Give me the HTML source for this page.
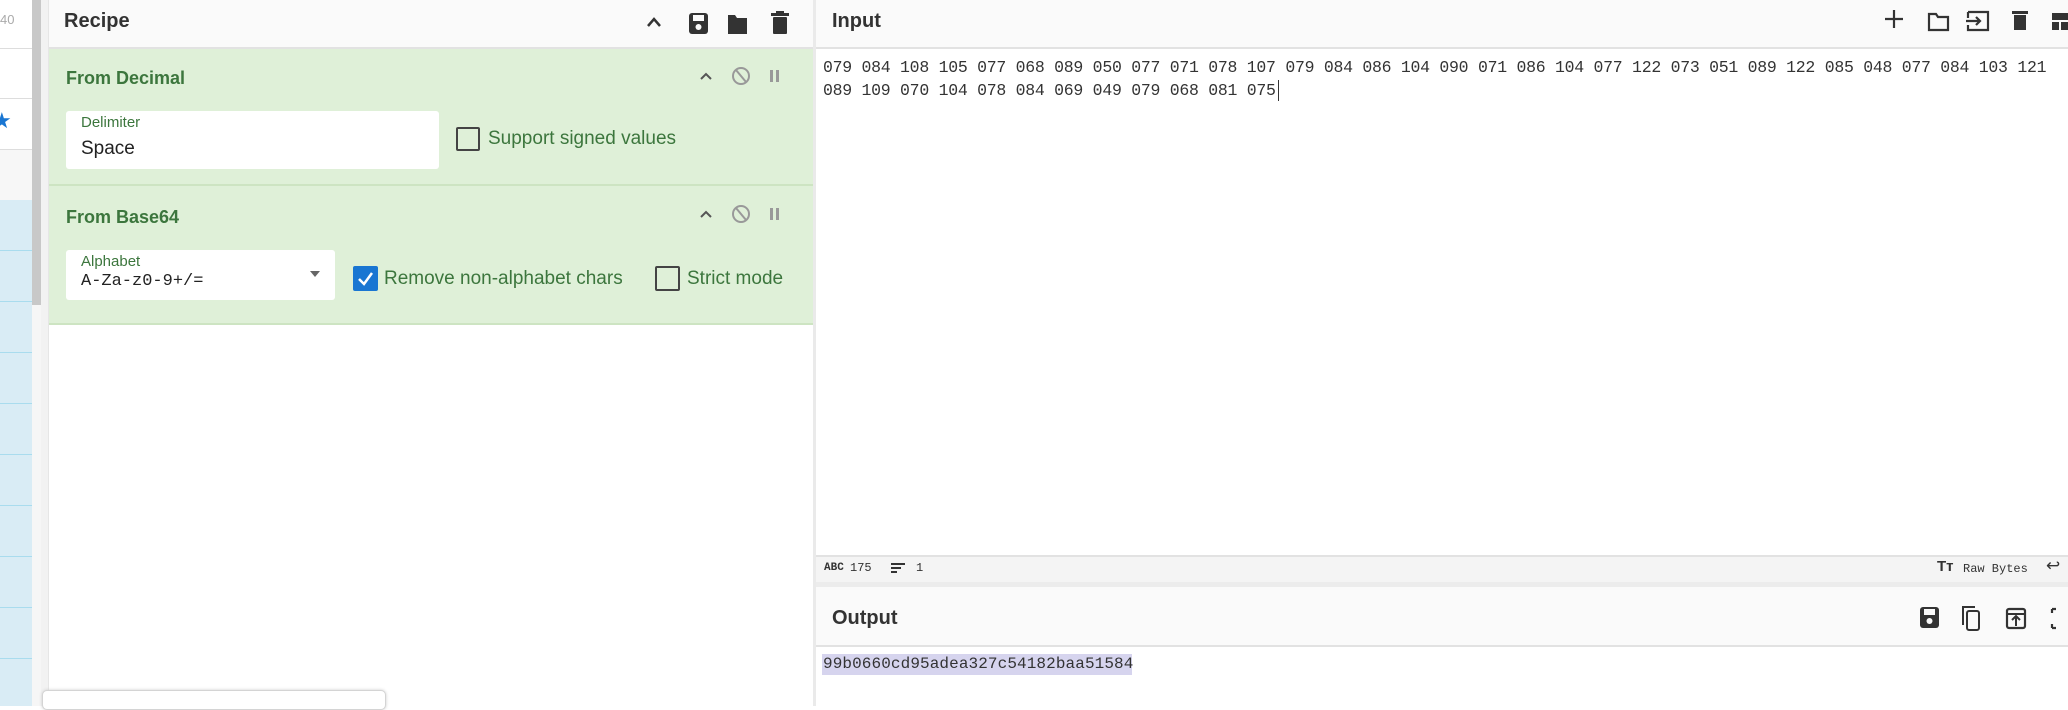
<!DOCTYPE html>
<html><head><meta charset="utf-8"><style>
*{box-sizing:border-box;margin:0;padding:0}
body{width:2068px;height:706px;overflow:hidden;background:#fff;font-family:"Liberation Sans",sans-serif;position:relative}
.a{position:absolute}
.mono{font-family:"Liberation Mono",monospace}
.hdr{background:#fafafa;border-bottom:2px solid #e2e2e2}
.title{font-size:20px;font-weight:bold;color:#333}
.grn{background:#dff0d8}
.gt{color:#3c763d}
.box{background:#fff;border-radius:3px}
.cb{border:2px solid #444;border-radius:2px;background:transparent}
</style></head><body>
<!-- left strip -->
<div class="a" style="left:0;top:0;width:32px;height:706px;background:#fff"></div>
<div class="a" style="left:0;top:12px;font-size:13px;color:#aaa">40</div>
<div class="a" style="left:0;top:48px;width:32px;height:1px;background:#ddd"></div>
<div class="a" style="left:0;top:98px;width:32px;height:1px;background:#ddd"></div>
<div class="a" style="left:-8px;top:108px;color:#1976d2;font-size:22px">★</div>
<div class="a" style="left:0;top:149px;width:32px;height:51px;background:#f7f7f7;border-top:1px solid #ddd"></div>
<div class="a" style="left:0;top:200px;width:32px;height:506px;background:repeating-linear-gradient(#d9ecf5 0,#d9ecf5 50px,#a9dcee 50px,#a9dcee 51px)"></div>
<div class="a" style="left:32px;top:0;width:9px;height:305px;background:#c8c8c8"></div>
<div class="a" style="left:32px;top:305px;width:9px;height:401px;background:#f6f6f6"></div>
<div class="a" style="left:41px;top:0;width:8px;height:706px;background:#f2f2f2;border-right:1px solid #e6e6e6"></div>
<!-- recipe -->
<div class="a hdr" style="left:49px;top:0;width:764px;height:49px"></div>
<div class="a title" style="left:64px;top:10px">Recipe</div>
<svg class="a" style="left:644px;top:10px" width="160" height="26" viewBox="0 0 160 26">
<path d="M4 16 L10 9 L16 16" stroke="#333" stroke-width="2.5" fill="none"/>
<rect x="45" y="3" width="19" height="21" rx="3" fill="#333"/><rect x="49" y="5" width="11" height="6" fill="#fafafa"/><circle cx="54.5" cy="17" r="3" fill="#fafafa"/>
<path d="M84 5 h7 l2 3 h10 v16 h-19z" fill="#333"/>
<rect x="129" y="7" width="14" height="17" rx="1" fill="#333"/><rect x="127" y="3" width="18" height="3" fill="#333"/><rect x="132" y="1" width="8" height="3" fill="#333"/>
</svg>
<div class="a grn" style="left:49px;top:49px;width:764px;height:137px;border-bottom:2px solid #cde4c2"></div>
<div class="a gt" style="left:66px;top:68px;font-size:18px;font-weight:bold">From Decimal</div>
<svg class="a" style="left:696px;top:64px" width="100" height="24"><path d="M5 15 L10 10 L15 15" stroke="#555" stroke-width="2" fill="none"/><circle cx="45" cy="12" r="8" stroke="#999" stroke-width="2" fill="none"/><path d="M40 6 L50 18" stroke="#999" stroke-width="2"/><rect x="74" y="6" width="3" height="12" fill="#999"/><rect x="80" y="6" width="3" height="12" fill="#999"/></svg>
<div class="a box" style="left:66px;top:111px;width:373px;height:58px"></div>
<div class="a gt" style="left:81px;top:114px;font-size:15px">Delimiter</div>
<div class="a" style="left:81px;top:138px;font-size:19px;color:#222">Space</div>
<div class="a cb" style="left:456px;top:127px;width:24px;height:24px"></div>
<div class="a gt" style="left:488px;top:128px;font-size:19px">Support signed values</div>
<div class="a grn" style="left:49px;top:186px;width:764px;height:139px;border-bottom:2px solid #cde4c2"></div>
<div class="a gt" style="left:66px;top:207px;font-size:18px;font-weight:bold">From Base64</div>
<svg class="a" style="left:696px;top:202px" width="100" height="24"><path d="M5 15 L10 10 L15 15" stroke="#555" stroke-width="2" fill="none"/><circle cx="45" cy="12" r="8" stroke="#999" stroke-width="2" fill="none"/><path d="M40 6 L50 18" stroke="#999" stroke-width="2"/><rect x="74" y="6" width="3" height="12" fill="#999"/><rect x="80" y="6" width="3" height="12" fill="#999"/></svg>
<div class="a box" style="left:66px;top:250px;width:269px;height:50px"></div>
<div class="a gt" style="left:81px;top:253px;font-size:15px">Alphabet</div>
<div class="a mono" style="left:81px;top:272px;font-size:17px;color:#222">A-Za-z0-9+/=</div>
<div class="a" style="left:310px;top:271px;width:0;height:0;border-left:5px solid transparent;border-right:5px solid transparent;border-top:6px solid #666"></div>
<div class="a" style="left:353px;top:266px;width:25px;height:25px;background:#1976d2;border-radius:2px"></div>
<svg class="a" style="left:353px;top:266px" width="25" height="25"><path d="M6 13 L11 18 L19 7" stroke="#fff" stroke-width="2.5" fill="none"/></svg>
<div class="a gt" style="left:384px;top:268px;font-size:19px">Remove non-alphabet chars</div>
<div class="a cb" style="left:655px;top:266px;width:25px;height:25px"></div>
<div class="a gt" style="left:687px;top:268px;font-size:19px">Strict mode</div>
<div class="a" style="left:42px;top:690px;width:344px;height:20px;background:#fff;border:1px solid #d4d4d4;border-radius:5px;box-shadow:0 0 3px #ccc"></div>
<div class="a" style="left:813px;top:0;width:3px;height:706px;background:#eaeaea"></div>
<!-- input -->
<div class="a hdr" style="left:816px;top:0;width:1252px;height:49px"></div>
<div class="a title" style="left:832px;top:10px">Input</div>
<svg class="a" style="left:1880px;top:6px" width="188" height="30"><path d="M14 4 v18 M5 13 h18" stroke="#333" stroke-width="2.2"/><path d="M49 8 h7 l2 3 h10 v13 h-19z" stroke="#333" stroke-width="2.2" fill="none"/><path d="M88 6 h20 v18 h-20 v-5 M88 12 v-6 M86 15 h14 M96 11 l4 4 -4 4" stroke="#333" stroke-width="2.2" fill="none"/><rect x="134" y="9" width="12" height="15" fill="#333"/><rect x="132" y="5" width="16" height="3" fill="#333"/><rect x="172" y="7" width="16" height="17" fill="#333"/><path d="M172 15 h16 M180 15 v9" stroke="#fafafa" stroke-width="2"/></svg>
<div class="a mono" style="left:823px;top:56px;font-size:16.5px;letter-spacing:-0.27px;line-height:23px;color:#333;width:1240px;white-space:pre">079 084 108 105 077 068 089 050 077 071 078 107 079 084 086 104 090 071 086 104 077 122 073 051 089 122 085 048 077 084 103 121
089 109 070 104 078 084 069 049 079 068 081 075</div>
<div class="a" style="left:1278px;top:80px;width:1px;height:21px;background:#333"></div>
<div class="a" style="left:816px;top:555px;width:1252px;height:27px;background:#f4f4f4;border-top:2px solid #e2e2e2"></div>
<div class="a mono" style="left:824px;top:562px;font-size:11px;color:#333;font-weight:bold">ABC</div>
<div class="a mono" style="left:850px;top:561px;font-size:12px;color:#333">175</div>
<svg class="a" style="left:890px;top:562px" width="18" height="14"><path d="M1 2h14M1 6h10M1 10h6" stroke="#333" stroke-width="2"/></svg>
<div class="a mono" style="left:916px;top:561px;font-size:12px;color:#333">1</div>
<div class="a" style="left:1937px;top:558px;font-size:15px;font-weight:bold;color:#333">Tт</div>
<div class="a mono" style="left:1963px;top:562px;font-size:12px;color:#333">Raw Bytes</div>
<div class="a" style="left:2046px;top:556px;font-size:17px;color:#333">↩</div>
<div class="a" style="left:816px;top:582px;width:1252px;height:5px;background:#ececec"></div>
<!-- output -->
<div class="a hdr" style="left:816px;top:587px;width:1252px;height:60px"></div>
<div class="a title" style="left:832px;top:607px">Output</div>
<svg class="a" style="left:1918px;top:603px" width="150" height="30"><rect x="2" y="4" width="19" height="21" rx="3" fill="#333"/><rect x="6" y="6" width="11" height="6" fill="#fafafa"/><circle cx="11.5" cy="18" r="3" fill="#fafafa"/><rect x="49" y="8" width="12" height="19" rx="2" stroke="#333" stroke-width="2" fill="none"/><path d="M45 22 V4 h12" stroke="#333" stroke-width="2" fill="none"/><rect x="89" y="6" width="18" height="19" rx="2" stroke="#333" stroke-width="2.2" fill="none"/><path d="M89 11 h18 M98 23 v-9 M94 17 l4 -4 4 4" stroke="#333" stroke-width="2" fill="none"/><path d="M134 6 h4 M134 6 v4 M134 25 h4 M134 25 v-4" stroke="#333" stroke-width="2.2" fill="none"/></svg>
<div class="a" style="left:822px;top:654px;width:310px;height:21px;background:#d6d4ee"></div>
<div class="a mono" style="left:823px;top:655px;font-size:16px;letter-spacing:0.1px;color:#333">99b0660cd95adea327c54182baa51584</div>
</body></html>
